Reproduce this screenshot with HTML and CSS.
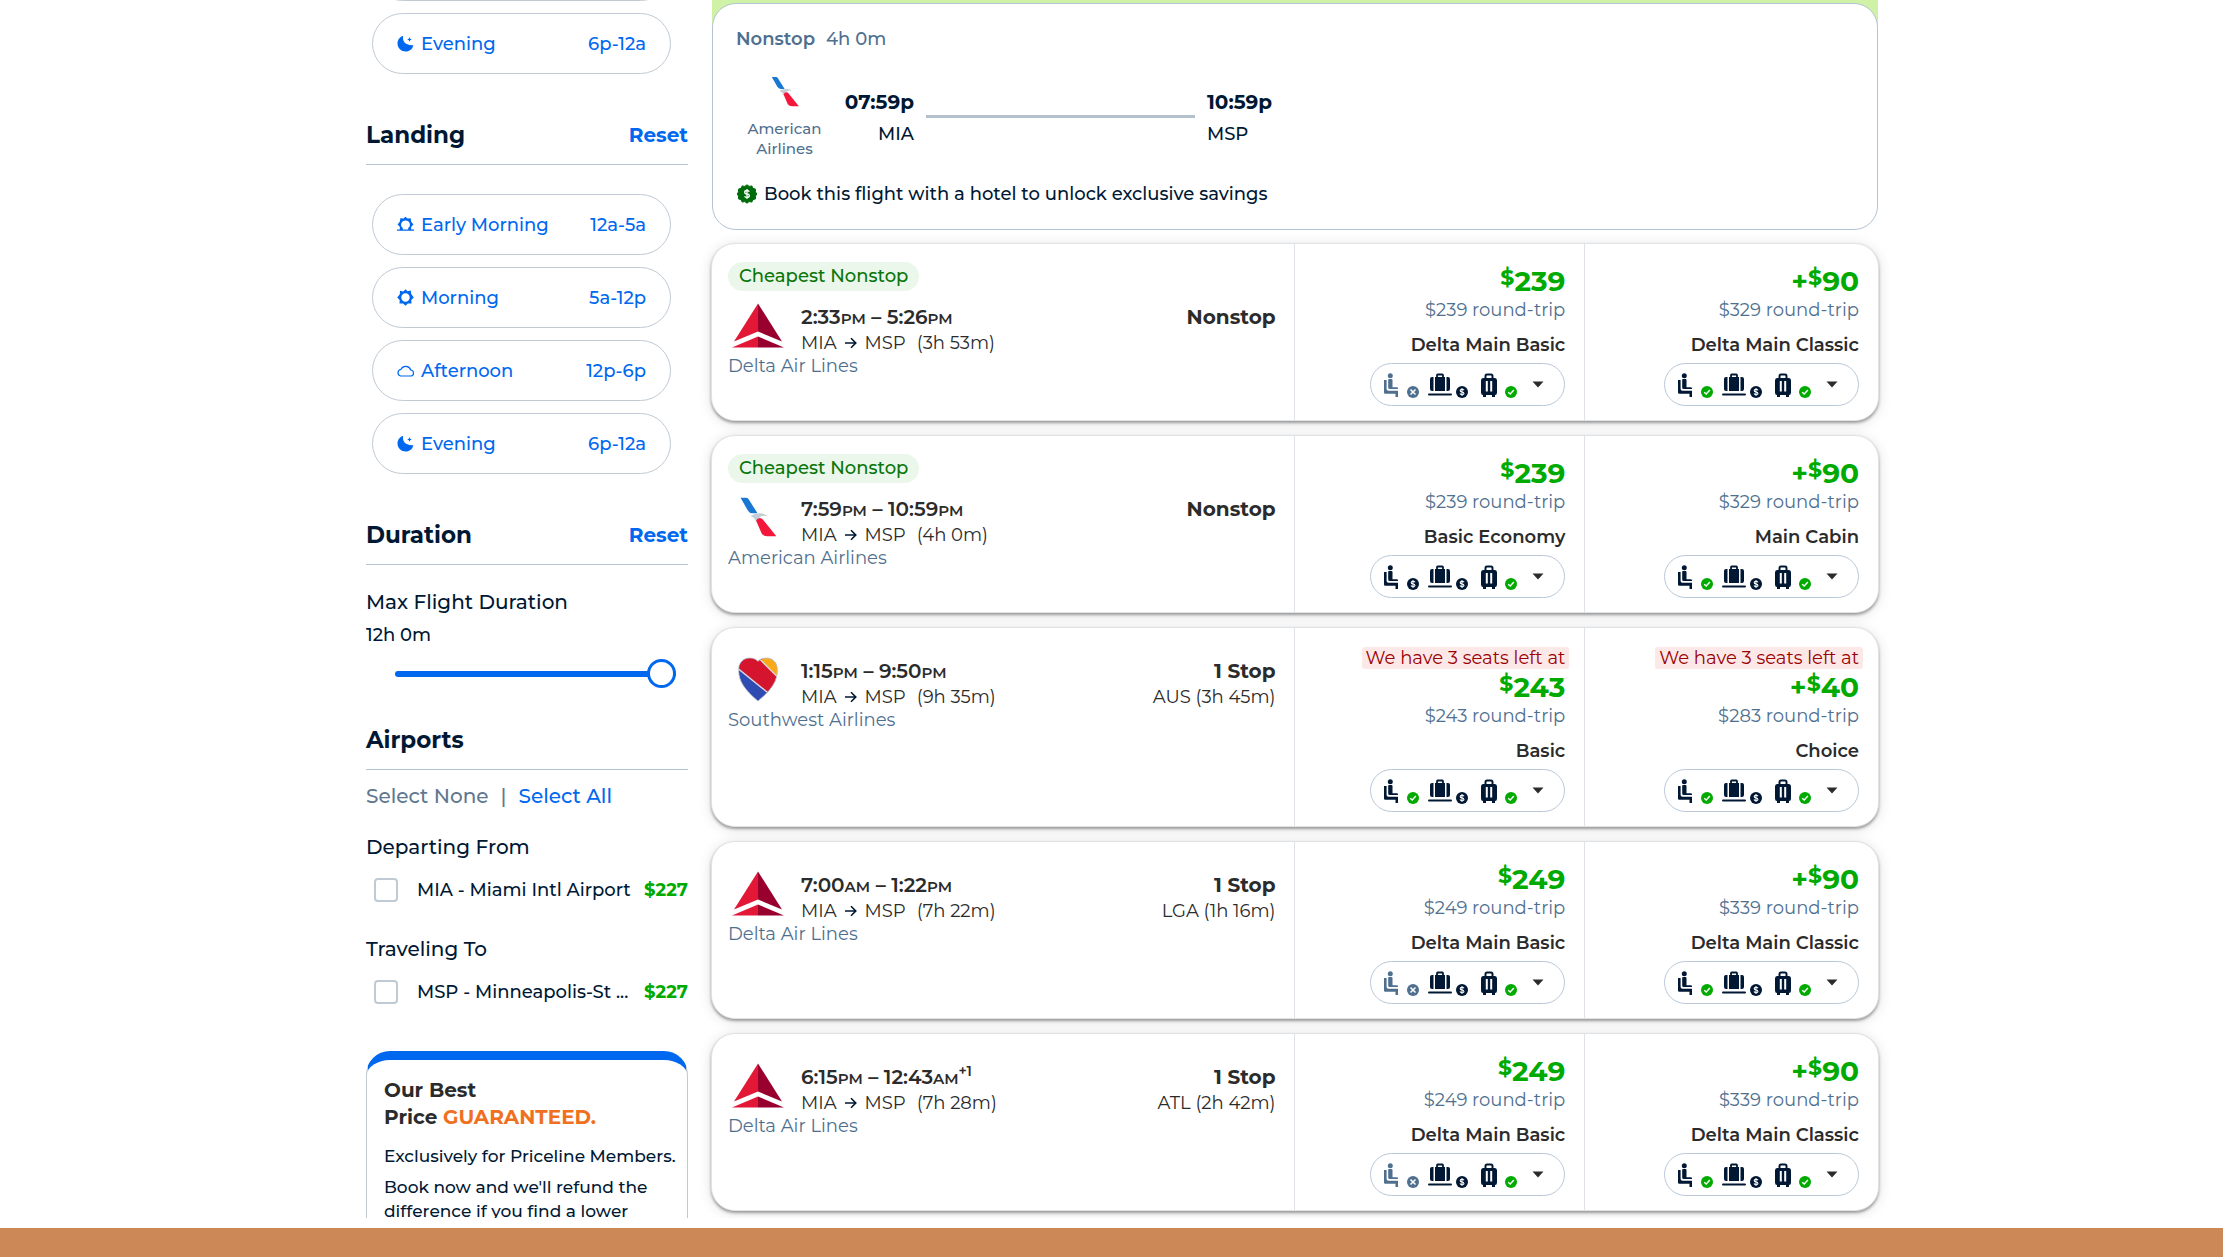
FILE: index.html
```html
<!DOCTYPE html>
<html lang="en">
<head>
<meta charset="utf-8">
<meta name="viewport" content="width=device-width, initial-scale=1">
<title>Flights MIA to MSP</title>
<link rel="stylesheet" href="styles.css">
</head>
<body>

<!-- icon sprite -->
<svg class="sprite" aria-hidden="true">
  <symbol id="moon" viewBox="0 0 17 17">
    <path fill="currentColor" d="M6.2.8C4.9 5.500 8 10.800 16.400 10.200 15.600 14 12.500 16.500 8.800 16.500 4.300 16.500.5 13 .5 8.500.5 5 2.700 1.800 6.200.8z"/>
    <path fill="currentColor" d="M12.500 2.200l.7 1.600 1.600.7-1.600.7-.7 1.600-.7-1.600-1.600-.7 1.600-.7z"/>
  </symbol>
  <symbol id="sun" viewBox="0 0 17 17">
    <path fill="currentColor" fill-rule="evenodd" d="M8.500.2l2.100 2 3.200-.8.300 3.400L16.800 8.500l-2.500 2.600.2 3.400-3.600-.1-2.400 2.400-2.400-2.400-3.600.1.2-3.400L.2 8.500l2.600-3.200.2-3.600 3.300.7zM8.500 4.300a4.200 4.200 0 100 8.400 4.200 4.200 0 000-8.400z"/>
  </symbol>
  <symbol id="sunrise" viewBox="0 0 17 17">
    <path fill="currentColor" fill-rule="evenodd" d="M8.500.8l2 1.800 3.200-.4.400 3.300 2.300 2.900-2.300 2.700.1 2.300H17v1.400H0v-1.400h2.800l.1-2.300L.6 8.400l2.300-2.900.4-3.300 3.200.4zM8.500 4.400A4.300 4.300 0 005.800 12.100v1.300h5.400v-1.300a4.300 4.300 0 00-2.700-7.700z"/>
  </symbol>
  <symbol id="cloud" viewBox="0 0 17 17">
    <path fill="none" stroke="currentColor" stroke-width="1.200" d="M3.700 14h9.600a3 3 0 00.4-6A5.300 5.300 0 004 7.300 3.400 3.400 0 003.700 14z"/>
  </symbol>
  <symbol id="arrow" viewBox="0 0 12 12">
    <path fill="none" stroke="currentColor" stroke-width="1.600" d="M0 6h10M6 1.200L10.800 6 6 10.800"/>
  </symbol>
  <symbol id="seat" viewBox="0 0 17 24">
    <circle fill="currentColor" cx="7.300" cy="2.700" r="2.500"/>
    <path fill="currentColor" d="M5.200 6.500Q5.200 6 6 6h2.500q1 0 1 1v7.200h4.300q1.200 0 1.200 1.300V16H6.700q-1.500 0-1.500-1.500z"/>
    <path fill="currentColor" d="M1 7h2.600v9q0 1.800 1.800 1.800H15V24h-2.500v-3.300H2.200Q1 20.700 1 19.500z"/>
  </symbol>
  <symbol id="carryon" viewBox="0 0 24 24">
    <path fill="none" stroke="currentColor" stroke-width="1.800" d="M9 5V2.200Q9 1.500 9.700 1.500h4.600q.7 0 .7.700V5"/>
    <path fill="currentColor" d="M7 4h10v14H7zM5.500 4v14H4Q2 18 2 16V6q0-2 2-2zM18.500 4v14H20q2 0 2-2V6q0-2-2-2zM1 20.500h22q1 0 1 1t-1 1H1q-1 0-1-1t1-1z"/>
  </symbol>
  <symbol id="luggage" viewBox="0 0 18 24">
    <path fill="none" stroke="currentColor" stroke-width="2" d="M5.500 6V3Q5.500 1.500 7 1.500h4q1.500 0 1.500 1.500v3"/>
    <path fill="currentColor" fill-rule="evenodd" d="M3 5h12q2 0 2 2.500v12Q17 22 15 22H3Q1 22 1 19.500v-12Q1 5 3 5zM5.800 8v10.500h2V8zm4.400 0v10.500h2V8z"/>
    <path fill="currentColor" d="M3 21h3v3H3zM12 21h3v3h-3z"/>
  </symbol>
  <symbol id="check" viewBox="0 0 12 12">
    <circle cx="6" cy="6" r="6" fill="#0a0"/>
    <path fill="none" stroke="#fff" stroke-width="1.400" d="M3.200 6.200l2 1.800L8.900 4"/>
  </symbol>
  <symbol id="fee" viewBox="0 0 12 12">
    <circle cx="6" cy="6" r="6" fill="#001833"/>
    <path fill="none" stroke="#fff" stroke-width="1.100" d="M8 4.300Q7.400 3.300 6 3.300 4.200 3.300 4.200 4.600T6 6q1.900.1 1.900 1.400T6 8.700Q4.500 8.700 4 7.600M6 2v8"/>
  </symbol>
  <symbol id="none" viewBox="0 0 12 12">
    <circle cx="6" cy="6" r="6" fill="#4f6f8f"/>
    <path fill="none" stroke="#fff" stroke-width="1.500" d="M3.500 3.500l5 5M8.500 3.500l-5 5"/>
  </symbol>
  <symbol id="caret" viewBox="0 0 12 7">
    <path fill="#2b2b2b" d="M.5.5h11L6 6.500z"/>
  </symbol>
  <symbol id="deal" viewBox="0 0 20 20">
    <path fill="#006b0b" stroke="#006b0b" stroke-linejoin="round" d="M10 .8l2.200 1.600 2.600-.5 1.200 2.400 2.600.9-.2 2.700L20 10l-1.600 2.100.2 2.700-2.600.9-1.200 2.400-2.600-.5L10 19.200l-2.200-1.600-2.600.5L4 15.700l-2.600-.9.2-2.700L0 10l1.600-2.100-.2-2.700L4 4.300l1.200-2.400 2.600.5z"/>
    <path fill="none" stroke="#fff" stroke-width="1.300" d="M12.300 7.800Q11.700 6.500 10 6.500 7.700 6.500 7.700 8.200T10 10q2.300.1 2.300 1.800T10 13.500q-1.800 0-2.400-1.300M10 5v10"/>
  </symbol>
  <symbol id="delta" viewBox="0 0 52 44">
    <path fill="#e31837" d="M26 0v28L2 38z"/>
    <path fill="#98002e" d="M26 0l24 38L26 28z"/>
    <path fill="#e31837" d="M26 33v11H0z"/>
    <path fill="#98002e" d="M26 33v11h26z"/>
  </symbol>
  <symbol id="american" viewBox="-3 -3 46 49">
    <path fill="#1a78d2" d="M1 0h6q2 0 3 2l9.500 15H14q-3.500 0-5-3z"/>
    <path fill="#c3cdd4" d="M12 20q4-3 10-3 6 0 8 3-3-1-6 0-4 1.500-5 7-1-1-2-3-1.500-2.500-5-4z"/>
    <path fill="#f5173b" d="M18 25q1-3 4-3 2 0 3.500 2L40 42H30q-4 0-6-3z"/>
  </symbol>
  <symbol id="southwest" viewBox="0 0 47 52">
    <clipPath id="heart"><path d="M23.500 51C8 38 1 28 1 15 1 0 17-2 23.500 5 30-2 46 0 46 15c0 13-7 23-22.500 36z"/></clipPath>
    <g clip-path="url(#heart)">
      <path fill="#304cb2" d="M0 0h47v52H0z"/>
      <path fill="#d5152e" d="M0 12L12-4l18 6 18 20-13 20z"/>
      <path fill="#fbaa17" d="M27 4l6-6h16v27z"/>
      <path fill="none" stroke="#d8dbe0" stroke-width="1.600" d="M0 13l37 30M26 3l21 21"/>
    </g>
    <path fill="none" stroke="#c9ccd2" d="M23.500 51C8 38 1 28 1 15 1 0 17-2 23.500 5 30-2 46 0 46 15c0 13-7 23-22.500 36z"/>
  </symbol>
</svg>

<div class="page">
  <div class="content">

    <!-- filters -->
    <aside class="sidebar">
      <div class="pills">
        <button class="pill"><svg><use href="#cloud"/></svg>Afternoon<span>12p-6p</span></button>
        <button class="pill"><svg><use href="#moon"/></svg>Evening<span>6p-12a</span></button>
      </div>

      <div class="filter-header">
        <h2>Landing</h2>
        <button class="reset">Reset</button>
      </div>
      <div class="pills">
        <button class="pill"><svg><use href="#sunrise"/></svg>Early Morning<span>12a-5a</span></button>
        <button class="pill"><svg><use href="#sun"/></svg>Morning<span>5a-12p</span></button>
        <button class="pill"><svg><use href="#cloud"/></svg>Afternoon<span>12p-6p</span></button>
        <button class="pill"><svg><use href="#moon"/></svg>Evening<span>6p-12a</span></button>
      </div>

      <div class="filter-header">
        <h2>Duration</h2>
        <button class="reset">Reset</button>
      </div>
      <div class="duration">
        <label for="duration">Max Flight Duration</label>
        <p>12h 0m</p>
        <input id="duration" type="range" min="1" max="12" value="12">
      </div>

      <div class="filter-header">
        <h2>Airports</h2>
      </div>
      <div class="select-links"><a class="muted" href="#">Select None</a><span>|</span><a href="#">Select All</a></div>
      <h3>Departing From</h3>
      <div class="airport">
        <input id="mia" type="checkbox">
        <label for="mia">MIA - Miami Intl Airport</label>
        <b>$227</b>
      </div>
      <h3 class="to">Traveling To</h3>
      <div class="airport">
        <input id="msp" type="checkbox">
        <label for="msp">MSP - Minneapolis-St ...</label>
        <b>$227</b>
      </div>

      <div class="promo">
        <h4>Our Best<br>Price <em>GUARANTEED.</em></h4>
        <p>Exclusively for Priceline Members.</p>
        <p>Book now and we'll refund the<br>difference if you find a lower</p>
      </div>
    </aside>

    <!-- results -->
    <main class="results">
      <div class="selected-wrap">
        <section class="selected">
          <div class="summary"><b>Nonstop</b><span>4h 0m</span></div>
          <div class="leg">
            <div class="carrier"><svg><use href="#american"/></svg>American<br>Airlines</div>
            <div class="point depart"><b>07:59p</b><span>MIA</span></div>
            <div class="line"></div>
            <div class="point"><b>10:59p</b><span>MSP</span></div>
          </div>
          <div class="bundle"><svg><use href="#deal"/></svg>Book this flight with a hotel to unlock exclusive savings</div>
        </section>
      </div>

      <article class="flight">
        <div class="info">
          <span class="tag">Cheapest Nonstop</span>
          <div class="trip">
            <svg class="logo"><use href="#delta"/></svg>
            <div class="times"><b>2:33<small>PM</small> – 5:26<small>PM</small></b><p>MIA <svg><use href="#arrow"/></svg> MSP <span>(3h 53m)</span></p></div>
            <div class="stops"><b>Nonstop</b></div>
          </div>
          <p class="airline">Delta Air Lines</p>
        </div>
        <div class="fare">
          <div class="price"><sup>$</sup>239</div>
          <p class="total">$239 round-trip</p>
          <p class="name">Delta Main Basic</p>
          <button class="perks" aria-label="Fare details"><svg class="seat off"><use href="#seat"/></svg><svg class="mark"><use href="#none"/></svg><svg class="carry"><use href="#carryon"/></svg><svg class="mark"><use href="#fee"/></svg><svg class="bag"><use href="#luggage"/></svg><svg class="mark"><use href="#check"/></svg><svg class="caret"><use href="#caret"/></svg></button>
        </div>
        <div class="fare">
          <div class="price">+<sup>$</sup>90</div>
          <p class="total">$329 round-trip</p>
          <p class="name">Delta Main Classic</p>
          <button class="perks" aria-label="Fare details"><svg class="seat"><use href="#seat"/></svg><svg class="mark"><use href="#check"/></svg><svg class="carry"><use href="#carryon"/></svg><svg class="mark"><use href="#fee"/></svg><svg class="bag"><use href="#luggage"/></svg><svg class="mark"><use href="#check"/></svg><svg class="caret"><use href="#caret"/></svg></button>
        </div>
      </article>

      <article class="flight">
        <div class="info">
          <span class="tag">Cheapest Nonstop</span>
          <div class="trip">
            <svg class="logo"><use href="#american"/></svg>
            <div class="times"><b>7:59<small>PM</small> – 10:59<small>PM</small></b><p>MIA <svg><use href="#arrow"/></svg> MSP <span>(4h 0m)</span></p></div>
            <div class="stops"><b>Nonstop</b></div>
          </div>
          <p class="airline">American Airlines</p>
        </div>
        <div class="fare">
          <div class="price"><sup>$</sup>239</div>
          <p class="total">$239 round-trip</p>
          <p class="name">Basic Economy</p>
          <button class="perks" aria-label="Fare details"><svg class="seat"><use href="#seat"/></svg><svg class="mark"><use href="#fee"/></svg><svg class="carry"><use href="#carryon"/></svg><svg class="mark"><use href="#fee"/></svg><svg class="bag"><use href="#luggage"/></svg><svg class="mark"><use href="#check"/></svg><svg class="caret"><use href="#caret"/></svg></button>
        </div>
        <div class="fare">
          <div class="price">+<sup>$</sup>90</div>
          <p class="total">$329 round-trip</p>
          <p class="name">Main Cabin</p>
          <button class="perks" aria-label="Fare details"><svg class="seat"><use href="#seat"/></svg><svg class="mark"><use href="#check"/></svg><svg class="carry"><use href="#carryon"/></svg><svg class="mark"><use href="#fee"/></svg><svg class="bag"><use href="#luggage"/></svg><svg class="mark"><use href="#check"/></svg><svg class="caret"><use href="#caret"/></svg></button>
        </div>
      </article>

      <article class="flight">
        <div class="info">
          <div class="trip">
            <svg class="logo"><use href="#southwest"/></svg>
            <div class="times"><b>1:15<small>PM</small> – 9:50<small>PM</small></b><p>MIA <svg><use href="#arrow"/></svg> MSP <span>(9h 35m)</span></p></div>
            <div class="stops"><b>1 Stop</b><p>AUS (3h 45m)</p></div>
          </div>
          <p class="airline">Southwest Airlines</p>
        </div>
        <div class="fare">
          <p class="seats-left">We have 3 seats left at</p>
          <div class="price"><sup>$</sup>243</div>
          <p class="total">$243 round-trip</p>
          <p class="name">Basic</p>
          <button class="perks" aria-label="Fare details"><svg class="seat"><use href="#seat"/></svg><svg class="mark"><use href="#check"/></svg><svg class="carry"><use href="#carryon"/></svg><svg class="mark"><use href="#fee"/></svg><svg class="bag"><use href="#luggage"/></svg><svg class="mark"><use href="#check"/></svg><svg class="caret"><use href="#caret"/></svg></button>
        </div>
        <div class="fare">
          <p class="seats-left">We have 3 seats left at</p>
          <div class="price">+<sup>$</sup>40</div>
          <p class="total">$283 round-trip</p>
          <p class="name">Choice</p>
          <button class="perks" aria-label="Fare details"><svg class="seat"><use href="#seat"/></svg><svg class="mark"><use href="#check"/></svg><svg class="carry"><use href="#carryon"/></svg><svg class="mark"><use href="#fee"/></svg><svg class="bag"><use href="#luggage"/></svg><svg class="mark"><use href="#check"/></svg><svg class="caret"><use href="#caret"/></svg></button>
        </div>
      </article>

      <article class="flight">
        <div class="info">
          <div class="trip">
            <svg class="logo"><use href="#delta"/></svg>
            <div class="times"><b>7:00<small>AM</small> – 1:22<small>PM</small></b><p>MIA <svg><use href="#arrow"/></svg> MSP <span>(7h 22m)</span></p></div>
            <div class="stops"><b>1 Stop</b><p>LGA (1h 16m)</p></div>
          </div>
          <p class="airline">Delta Air Lines</p>
        </div>
        <div class="fare">
          <div class="price"><sup>$</sup>249</div>
          <p class="total">$249 round-trip</p>
          <p class="name">Delta Main Basic</p>
          <button class="perks" aria-label="Fare details"><svg class="seat off"><use href="#seat"/></svg><svg class="mark"><use href="#none"/></svg><svg class="carry"><use href="#carryon"/></svg><svg class="mark"><use href="#fee"/></svg><svg class="bag"><use href="#luggage"/></svg><svg class="mark"><use href="#check"/></svg><svg class="caret"><use href="#caret"/></svg></button>
        </div>
        <div class="fare">
          <div class="price">+<sup>$</sup>90</div>
          <p class="total">$339 round-trip</p>
          <p class="name">Delta Main Classic</p>
          <button class="perks" aria-label="Fare details"><svg class="seat"><use href="#seat"/></svg><svg class="mark"><use href="#check"/></svg><svg class="carry"><use href="#carryon"/></svg><svg class="mark"><use href="#fee"/></svg><svg class="bag"><use href="#luggage"/></svg><svg class="mark"><use href="#check"/></svg><svg class="caret"><use href="#caret"/></svg></button>
        </div>
      </article>

      <article class="flight">
        <div class="info">
          <div class="trip">
            <svg class="logo"><use href="#delta"/></svg>
            <div class="times"><b>6:15<small>PM</small> – 12:43<small>AM</small><sup>+1</sup></b><p>MIA <svg><use href="#arrow"/></svg> MSP <span>(7h 28m)</span></p></div>
            <div class="stops"><b>1 Stop</b><p>ATL (2h 42m)</p></div>
          </div>
          <p class="airline">Delta Air Lines</p>
        </div>
        <div class="fare">
          <div class="price"><sup>$</sup>249</div>
          <p class="total">$249 round-trip</p>
          <p class="name">Delta Main Basic</p>
          <button class="perks" aria-label="Fare details"><svg class="seat off"><use href="#seat"/></svg><svg class="mark"><use href="#none"/></svg><svg class="carry"><use href="#carryon"/></svg><svg class="mark"><use href="#fee"/></svg><svg class="bag"><use href="#luggage"/></svg><svg class="mark"><use href="#check"/></svg><svg class="caret"><use href="#caret"/></svg></button>
        </div>
        <div class="fare">
          <div class="price">+<sup>$</sup>90</div>
          <p class="total">$339 round-trip</p>
          <p class="name">Delta Main Classic</p>
          <button class="perks" aria-label="Fare details"><svg class="seat"><use href="#seat"/></svg><svg class="mark"><use href="#check"/></svg><svg class="carry"><use href="#carryon"/></svg><svg class="mark"><use href="#fee"/></svg><svg class="bag"><use href="#luggage"/></svg><svg class="mark"><use href="#check"/></svg><svg class="caret"><use href="#caret"/></svg></button>
        </div>
      </article>
    </main>
  </div>
</div>
<footer class="bottom-bar"></footer>

</body>
</html>
```

FILE: styles.css
```css
* {
  box-sizing: border-box;
  margin: 0;
  padding: 0;
}

body {
  display: flex;
  flex-direction: column;
  height: 100vh;
  overflow: hidden;
  background: #fff;
  color: #001833;
  font-family: Montserrat, Inter, sans-serif;
  font-size: 18px;
  font-weight: 500;
  line-height: 24px;
}

button,
input {
  font: inherit;
  cursor: pointer;
}

a {
  color: #0068ef;
  text-decoration: none;
}

.sprite {
  position: absolute;
  width: 0;
  height: 0;
}

.page {
  flex: 1;
  min-height: 0;
  overflow: hidden;
}

.content {
  display: grid;
  grid-template-columns: 322px 1fr;
  gap: 23px;
  max-width: 1535px;
  margin: 0 auto;
  padding-left: 22px;
}

.bottom-bar {
  height: 29px;
  margin-top: 10px;
  background: #cd8858;
}

/* ---- sidebar ---- */
.sidebar {
  margin-top: -60px; /* list is scrolled part way */
}

.pills {
  display: flex;
  flex-direction: column;
  gap: 12px;
  padding: 0 17px 9px 6px;
}

.pill {
  display: flex;
  align-items: center;
  gap: 7px;
  height: 61px;
  padding: 0 24px;
  border: 1px solid #c0cad5;
  border-radius: 31px;
  background: #fff;
  color: #0068ef;
}

.pill svg {
  width: 17px;
  height: 17px;
}

.pill span {
  margin-left: auto;
}

.filter-header {
  display: flex;
  justify-content: space-between;
  align-items: center;
  margin-top: 37px;
  padding-bottom: 14px;
  border-bottom: 1px solid #b4c3d3;
  line-height: 30px;
}

.filter-header + .pills {
  margin-top: 29px;
}

.filter-header h2 {
  font-size: 23px;
  font-weight: 700;
}

.reset {
  border: none;
  background: none;
  color: #0068ef;
  font-size: 20px;
  font-weight: 700;
}

.duration {
  padding-top: 23px;
}

.duration label {
  display: block;
  font-size: 20px;
  line-height: 28px;
}

.duration p {
  margin: 7px 0 12px;
}

.duration input {
  display: block;
  width: 281px;
  height: 29px;
  margin-left: 29px;
  background: none;
  -webkit-appearance: none;
  appearance: none;
}

.duration input::-webkit-slider-runnable-track {
  height: 6px;
  border-radius: 3px;
  background: #0068ef;
}

.duration input::-webkit-slider-thumb {
  -webkit-appearance: none;
  width: 29px;
  height: 29px;
  margin-top: -12px;
  border: 3px solid #0068ef;
  border-radius: 50%;
  background: #fff;
}

.select-links {
  display: flex;
  gap: 12px;
  margin-top: 12px;
  color: #5f7890;
  font-size: 20px;
  line-height: 28px;
}

.select-links .muted {
  color: #5f7890;
}

.sidebar h3 {
  margin: 23px 0 17px;
  font-size: 20px;
  font-weight: 500;
  line-height: 28px;
}

.sidebar h3.to {
  margin-top: 33px;
}

.airport {
  display: flex;
  align-items: center;
  padding-left: 8px;
}

.airport input {
  width: 24px;
  height: 24px;
  margin-right: 19px;
  border: 2px solid #c0cad5;
  border-radius: 4px;
  background: #fff;
  -webkit-appearance: none;
  appearance: none;
}

.airport b {
  margin-left: auto;
  color: #0a0;
  font-weight: 700;
}

.promo {
  margin-top: 47px;
  padding: 17px 0 24px 17px;
  border: 1px solid #c0cad5;
  border-top: 9px solid #0068ef;
  border-radius: 24px;
  font-size: 17px;
  white-space: nowrap;
}

.promo h4 {
  margin-bottom: 13px;
  color: #2b2b2b;
  font-size: 20px;
  font-weight: 700;
  line-height: 27px;
}

.promo em {
  color: #f07020;
  font-style: normal;
}

.promo p {
  margin-bottom: 7px;
}

/* ---- selected flight ---- */
.selected-wrap {
  margin: 0 1px 13px;
  padding-top: 3px;
  background: linear-gradient(#cff2a6, #cff2a6) no-repeat 0 0 / 100% 24px;
}

.selected {
  height: 227px;
  padding: 23px 23px 0;
  border: 1px solid #b4c3d3;
  border-radius: 24px;
  background: #fff;
}

.summary {
  display: flex;
  gap: 11px;
  color: #4f6f8f;
}

.summary b {
  font-weight: 600;
}

.leg {
  display: flex;
  align-items: flex-start;
  margin-top: 24px;
}

.carrier {
  width: 97px;
  color: #4f6f8f;
  font-size: 15px;
  line-height: 20px;
  text-align: center;
}

.carrier svg {
  display: block;
  width: 34px;
  height: 34px;
  margin: 0 auto 10px;
}

.point {
  margin-top: 15px;
}

.point b {
  display: block;
  margin-bottom: 8px;
  font-size: 20px;
  font-weight: 700;
}

.point span {
  display: block;
}

.depart {
  width: 81px;
  text-align: right;
}

.line {
  width: 269px;
  height: 3px;
  margin: 40px 12px 0;
  background: #b4c0cc;
}

.bundle {
  display: flex;
  align-items: center;
  gap: 7px;
  margin-top: 23px;
}

.bundle svg {
  width: 20px;
  height: 20px;
  margin-left: 1px;
}

/* ---- flight cards ---- */
.flight {
  display: grid;
  grid-template-columns: 200fr 100fr 101fr;
  margin-bottom: 14px;
  border: 1px solid #e0e3e6;
  border-radius: 24px;
  background: #fff;
  box-shadow: 0 2px 3px rgba(0, 0, 0, 0.35), 0 2px 14px rgba(0, 0, 0, 0.12);
}

.info {
  padding: 29px 18px 0 16px;
  color: #2b2b2b;
}

.tag {
  display: block;
  width: fit-content;
  margin: -11px 0 12px;
  padding: 0 11px;
  border-radius: 15px;
  background: #ebf7eb;
  color: #0a750a;
  line-height: 29px;
}

.trip {
  display: flex;
}

.logo {
  width: 52px;
  height: 45px;
  margin: 0 17px 0 4px;
}

.times b,
.stops b {
  display: block;
  font-size: 20px;
  font-weight: 700;
  line-height: 28px;
}

.times b {
  font-weight: 600;
}

.times small {
  font-size: 15px;
  line-height: 0;
}

.times sup {
  font-size: 14px;
  line-height: 0;
}

.times p,
.stops p {
  font-weight: 400;
}

.times p {
  display: flex;
  align-items: center;
}

.times svg {
  width: 12px;
  height: 12px;
  margin: 0 8px;
  color: #001833;
}

.times span {
  margin-left: 11px;
}

.stops {
  margin-left: auto;
  text-align: right;
}

.airline {
  color: #4f6f8f;
  font-weight: 400;
  line-height: 22px;
}

.fare {
  display: flex;
  flex-direction: column;
  align-items: flex-end;
  padding: 19px 19px 14px 0;
  border-left: 1px solid #dfe3e8;
}

.seats-left {
  margin-right: -4px;
  padding: 0 4px;
  border-radius: 3px;
  background: #fde8e8;
  color: #900;
  font-weight: 400;
  line-height: 22px;
}

.price {
  color: #0a0;
  font-size: 28px;
  font-weight: 700;
  line-height: 36px;
}

.price sup {
  font-size: 22px;
  line-height: 0;
  vertical-align: 6px;
}

.total {
  margin-bottom: 12px;
  color: #4f6f8f;
  font-weight: 400;
  line-height: 22px;
}

.name {
  margin-bottom: 6px;
  color: #2b2b2b;
  font-weight: 600;
}

.perks {
  display: flex;
  align-items: center;
  width: 195px;
  height: 43px;
  padding: 0 12px;
  border: 1px solid #b9c8d8;
  border-radius: 22px;
  background: #fff;
  color: #001833;
}

.perks .seat {
  width: 17px;
  height: 24px;
  margin-right: 7px;
}

.perks .off {
  color: #4f6f8f;
}

.perks .mark {
  width: 12px;
  height: 12px;
  margin-top: 14px;
}

.perks .carry {
  width: 24px;
  height: 24px;
  margin: 0 4px 0 9px;
}

.perks .bag {
  width: 18px;
  height: 24px;
  margin: 0 7px 0 12px;
}

.perks .caret {
  width: 12px;
  height: 7px;
  margin-left: 15px;
}
```
